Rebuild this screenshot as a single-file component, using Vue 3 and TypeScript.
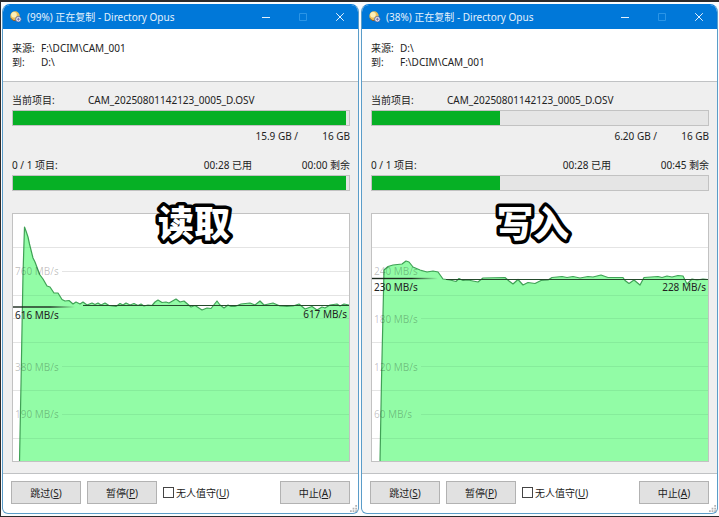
<script setup lang="ts">
type Point = [number, number]

interface CopyJob {
  id: string
  percent: number
  source: string
  target: string
  file: string
  done: string
  total: string
  elapsed: string
  remaining: string
  caption: string
  scale: { text: string; row: string; y: number }[]
  startSpeed: string
  currentSpeed: string
  startY: number
  averageY: number
  fadeEnd: number
  speeds: Point[]
}

const jobs: CopyJob[] = [
  {
    id: 'read',
    percent: 99,
    source: 'F:\\DCIM\\CAM_001',
    target: 'D:\\',
    file: 'CAM_20250801142123_0005_D.OSV',
    done: '15.9 GB /',
    total: '16 GB',
    elapsed: '00:28 已用',
    remaining: '00:00 剩余',
    caption: '读取',
    scale: [
      { text: '760 MB/s', row: 'r4', y: 57 },
      { text: '380 MB/s', row: 'r2', y: 152 },
      { text: '190 MB/s', row: 'r1', y: 200 },
    ],
    startSpeed: '616 MB/s',
    currentSpeed: '617 MB/s',
    startY: 93,
    averageY: 91.5,
    fadeEnd: 62,
    speeds: [
      [6.5, 248], [8, 170], [10, 60], [11.5, 13], [13, 17], [15, 23], [16.5, 30], [18, 36], [20, 44], [22, 48],
      [25, 56], [27, 61], [30, 65], [34, 72], [37, 73], [41, 79], [45, 79], [49, 85.5], [52, 87], [56, 86.5],
      [60, 90], [63, 88], [67, 90], [70, 88], [74, 91], [79, 89], [82, 90.5], [85, 89], [88, 91], [92, 89],
      [96, 91.5], [103, 92.5], [107, 89.5], [110, 91], [113, 89], [117, 91], [121, 89.5], [125, 91.5], [128, 90],
      [131, 92], [135, 91], [139, 91.5], [142, 88], [145, 86], [149, 88.5], [153, 88], [156, 89], [163, 85],
      [167, 88], [171, 87], [178, 93], [182, 91.5], [189, 96], [194, 94], [198, 94.5], [204, 87], [207, 91],
      [211, 94], [215, 91], [218, 92.5], [222, 92.5], [228, 90], [237, 89], [242, 91], [247, 87], [251, 91],
      [260, 89], [267, 92], [274, 92.5], [280, 92], [286, 90], [292, 95], [299, 92.5], [304, 96], [309, 93],
      [312, 94], [317, 91], [324, 90], [327, 92], [331, 90], [336, 91],
    ],
  },
  {
    id: 'write',
    percent: 38,
    source: 'D:\\',
    target: 'F:\\DCIM\\CAM_001',
    file: 'CAM_20250801142123_0005_D.OSV',
    done: '6.20 GB /',
    total: '16 GB',
    elapsed: '00:28 已用',
    remaining: '00:45 剩余',
    caption: '写入',
    scale: [
      { text: '240 MB/s', row: 'r4', y: 57 },
      { text: '180 MB/s', row: 'r3', y: 104 },
      { text: '120 MB/s', row: 'r2', y: 152 },
      { text: '60 MB/s', row: 'r1', y: 200 },
    ],
    startSpeed: '230 MB/s',
    currentSpeed: '228 MB/s',
    startY: 64.5,
    averageY: 65.5,
    fadeEnd: 66,
    speeds: [
      [8, 248], [9.5, 166], [12, 56], [16, 52.5], [21, 51], [30, 50], [34, 47], [37, 48], [41, 53], [48, 56],
      [55, 58], [61, 57], [66, 58], [71, 65], [78, 66], [84, 67.5], [87, 64.5], [91, 66.5], [96, 66], [106, 68],
      [111, 64], [133, 63.5], [137, 67], [141, 70], [146, 65.5], [151, 71], [156, 68.5], [163, 69.5], [169, 66.5],
      [176, 66], [180, 63.5], [190, 62.5], [195, 63.5], [201, 62.5], [208, 64], [216, 62.5], [221, 63], [229, 61],
      [236, 63.5], [251, 63.5], [253, 66.5], [257, 69.5], [262, 66], [268, 71], [272, 63.5], [286, 62.5],
      [290, 63.5], [295, 62], [300, 63], [306, 61.5], [311, 62], [315, 70], [320, 65], [325, 66], [331, 65],
      [336, 65.5],
    ],
  },
]

const gridLines = [33, 57, 81, 104, 128, 152, 176, 200, 224]

/* A grid line with a scale label starts to the right of that label. */
function gridStart(job: CopyJob, y: number): number {
  return job.scale.some((mark) => mark.y === y) ? 49 : 0
}

function tracePath(points: Point[]): string {
  return 'M' + points.map(([x, y]) => `${x} ${y}`).join('L')
}

function areaPath(points: Point[]): string {
  return `${tracePath(points)}V248H${points[0][0]}Z`
}
</script>

<template>
  <main class="desktop">
    <section v-for="job in jobs" :key="job.id" class="window" :class="job.id">
      <header class="titlebar">
        <svg class="app-icon" viewBox="0 0 12 12" aria-hidden="true">
          <circle cx="5" cy="5" r="4.7" fill="#efbf55" />
          <circle cx="4" cy="3.8" r="2.8" fill="#fdf0b8" />
          <path d="M.9 7.2a4.7 4.7 0 0 0 5 2.4" fill="none" stroke="#8a5c28" stroke-width="1" />
          <circle cx="8.4" cy="8.2" r="2.8" fill="#e8ecf8" stroke="#3c5290" stroke-width=".7" />
          <path d="M6.9 8.2h3M8.4 6.7v3" stroke="#6a6aa8" stroke-width=".9" />
        </svg>
        <h1 class="title">({{ job.percent }}%) 正在复制 - Directory Opus</h1>
        <button class="caption-button" type="button" aria-label="最小化">
          <svg viewBox="0 0 10 10"><path d="M1 5.5h8" /></svg>
        </button>
        <button class="caption-button" type="button" aria-label="最大化" disabled>
          <svg viewBox="0 0 10 10"><path d="M1.5 1.5h7v7h-7z" /></svg>
        </button>
        <button class="caption-button" type="button" aria-label="关闭">
          <svg viewBox="0 0 10 10"><path d="M1.2 1.2l7.6 7.6M8.8 1.2L1.2 8.8" /></svg>
        </button>
      </header>

      <dl class="paths">
        <dt>来源:</dt>
        <dd>{{ job.source }}</dd>
        <dt>到:</dt>
        <dd>{{ job.target }}</dd>
      </dl>

      <div class="body">
        <div class="row">
          <label class="row-label" :for="`${job.id}-file`">当前项目:</label>
          <span>{{ job.file }}</span>
        </div>
        <progress :id="`${job.id}-file`" class="bar" max="100" :value="job.percent"></progress>
        <div class="row figures sizes">
          <span class="done">{{ job.done }}</span>
          <span class="total">{{ job.total }}</span>
        </div>
        <div class="row figures times">
          <label class="count" :for="`${job.id}-all`">0 / 1 项目:</label>
          <span>{{ job.elapsed }}</span>
          <span class="remaining">{{ job.remaining }}</span>
        </div>
        <progress :id="`${job.id}-all`" class="bar" max="100" :value="job.percent"></progress>

        <div class="chart">
          <svg class="plot" viewBox="0 0 336 247" preserveAspectRatio="none" aria-hidden="true">
            <defs>
              <linearGradient :id="`${job.id}-fade`" gradientUnits="userSpaceOnUse" x1="0" y1="0" :x2="job.fadeEnd" y2="0">
                <stop offset=".6" stop-color="#1c2a1e" />
                <stop offset="1" stop-color="#1c2a1e" stop-opacity="0" />
              </linearGradient>
              <clipPath :id="`${job.id}-filled`">
                <path :d="areaPath(job.speeds)" />
              </clipPath>
            </defs>
            <path v-for="y in gridLines" :key="y" class="grid" :d="`M${gridStart(job, y)} ${y}.5H336`" />
            <path class="area" :d="areaPath(job.speeds)" />
            <g :clip-path="`url(#${job.id}-filled)`">
              <path v-for="y in gridLines" :key="y" class="grid shaded" :d="`M${gridStart(job, y)} ${y}.5H336`" />
            </g>
            <path class="trace" :d="tracePath(job.speeds)" />
            <rect x="0" :y="job.startY - 0.7" :width="job.fadeEnd" height="1.4" :fill="`url(#${job.id}-fade)`" />
            <path class="average" :d="`M${job.fadeEnd + 8} ${job.averageY}H336`" />
          </svg>
          <span v-for="mark in job.scale" :key="mark.text" class="mark" :class="mark.row">{{ mark.text }}</span>
          <span class="speed start">{{ job.startSpeed }}</span>
          <span class="speed current">{{ job.currentSpeed }}</span>
          <svg class="caption" viewBox="0 0 90 50">
            <text x="45" y="37" text-anchor="middle">{{ job.caption }}</text>
          </svg>
        </div>
      </div>

      <footer class="actions">
        <button class="push" type="button">跳过(<u>S</u>)</button>
        <button class="push" type="button">暂停(<u>P</u>)</button>
        <label class="unattended"><input type="checkbox" /><span>无人值守(<u>U</u>)</span></label>
        <button class="push abort" type="button">中止(<u>A</u>)</button>
        <svg class="grip" viewBox="0 0 8 8" aria-hidden="true">
          <path d="M6 0h2v2H6zM3 3h2v2H3zM6 3h2v2H6zM0 6h2v2H0zM3 6h2v2H3zM6 6h2v2H6z" fill="#b4b4b4" />
        </svg>
      </footer>
    </section>
  </main>
</template>

<style>
body {
  margin: 0;
}
</style>

<style scoped>
.desktop {
  box-sizing: border-box;
  display: grid;
  grid-template-columns: 1fr 1fr;
  gap: 2px;
  min-height: 100vh;
  padding: 2px 1px;
  border: solid #2c2a2b;
  border-width: 2px 0 1px 1px;
  background: #fbfcfd;
  color: #222;
  font: 10px/14px "Noto Sans", "Noto Sans CJK SC", sans-serif;
}

.window {
  position: relative;
  display: flex;
  flex-direction: column;
  min-width: 0;
  overflow: hidden;
  border: 1px solid #5b9dc9;
  border-top-color: #0078d9;
  border-radius: 8px 8px 6px 6px;
  background: #fff;
}

.titlebar {
  display: flex;
  align-items: center;
  height: 24px;
  padding-left: 7px;
  background: #0078d9;
  color: #e4f1fc;
}

.app-icon {
  width: 12px;
  height: 12px;
  margin-right: 5px;
}

.title {
  flex: 1;
  margin: 0;
  font-size: 10px;
  font-weight: 400;
  white-space: nowrap;
}

.caption-button {
  display: grid;
  place-items: center;
  width: 37px;
  height: 24px;
  padding: 0;
  border: 0;
  background: none;
  color: #e4f1fc;
}

.caption-button:disabled {
  color: #2b95e6;
}

.caption-button svg {
  width: 10px;
  height: 10px;
  fill: none;
  stroke: currentColor;
}

.paths {
  display: grid;
  grid-template-columns: 29px 1fr;
  margin: 0;
  padding: 12px 9px;
}

.paths dd {
  margin: 0;
}

.body {
  flex: 1;
  display: flex;
  flex-direction: column;
  padding: 10px 8px 11px 9px;
  border: solid #c0c2c4;
  border-width: 1px 0;
  background: #efefef;
}

.row {
  display: flex;
  line-height: 16px;
  white-space: nowrap;
}

.row-label {
  width: 76px;
}

.figures {
  justify-content: flex-end;
}

.sizes {
  margin: 2px 0 13px;
}

.total,
.remaining {
  min-width: 52px;
  text-align: right;
}

.remaining {
  min-width: 98px;
}

.count {
  flex: 1;
}

.bar {
  appearance: none;
  box-sizing: border-box;
  display: block;
  width: 100%;
  height: 16px;
  margin-top: 2px;
  border: 1px solid #c2c2c2;
  background: #e5e5e5;
}

.bar::-webkit-progress-bar {
  background: #e5e5e5;
}

.bar::-webkit-progress-value {
  background: #06b025;
}

.chart {
  position: relative;
  flex: 1;
  min-height: 200px;
  margin-top: 22px;
  border: 1px solid #c2c2c2;
  background: #fff;
}

.plot {
  position: absolute;
  inset: 0;
  width: 100%;
  height: 100%;
  fill: none;
}

.area {
  fill: #92fca6;
}

.grid {
  stroke: #e4e4e4;
}

.shaded {
  stroke: #86ec9b;
}

.trace {
  stroke: #3fa155;
  stroke-width: 1.2;
  stroke-linejoin: round;
}

.average {
  stroke: #254a2c;
}

.mark,
.speed {
  position: absolute;
  left: 2px;
  line-height: 14px;
  white-space: nowrap;
}

.mark {
  color: rgba(0, 0, 0, 0.24);
}

.r4 {
  top: 50px;
}

.r3 {
  top: 98px;
}

.r2 {
  top: 146px;
}

.r1 {
  top: 193px;
}

.start {
  top: 94px;
}

.current {
  top: 93px;
  right: 2px;
  left: auto;
}

.write .start,
.write .current {
  top: 66px;
}

.caption {
  position: absolute;
  top: -14px;
  left: 54%;
  width: 90px;
  height: 50px;
  margin-left: -45px;
  overflow: visible;
  fill: #fff;
  stroke: #000;
  stroke-width: 7px;
  stroke-linejoin: round;
  paint-order: stroke fill;
  font: 900 36px "Noto Sans CJK SC", sans-serif;
}

.write .caption {
  left: 48%;
}

.actions {
  display: flex;
  align-items: center;
  gap: 6px;
  padding: 7px 8px 9px;
}

.push {
  width: 70px;
  height: 23px;
  padding: 0;
  border: 1px solid #b2b2b2;
  background: #e1e1e1;
  color: #222;
  font: inherit;
}

.abort {
  margin-left: auto;
}

.unattended {
  display: flex;
  align-items: center;
  gap: 2px;
  white-space: nowrap;
}

.unattended input {
  appearance: none;
  box-sizing: border-box;
  width: 11px;
  height: 11px;
  margin: 0;
  border: 1px solid #444;
  background: #fff;
}

.grip {
  position: absolute;
  right: 1px;
  bottom: 1px;
  width: 7px;
  height: 7px;
}
</style>
